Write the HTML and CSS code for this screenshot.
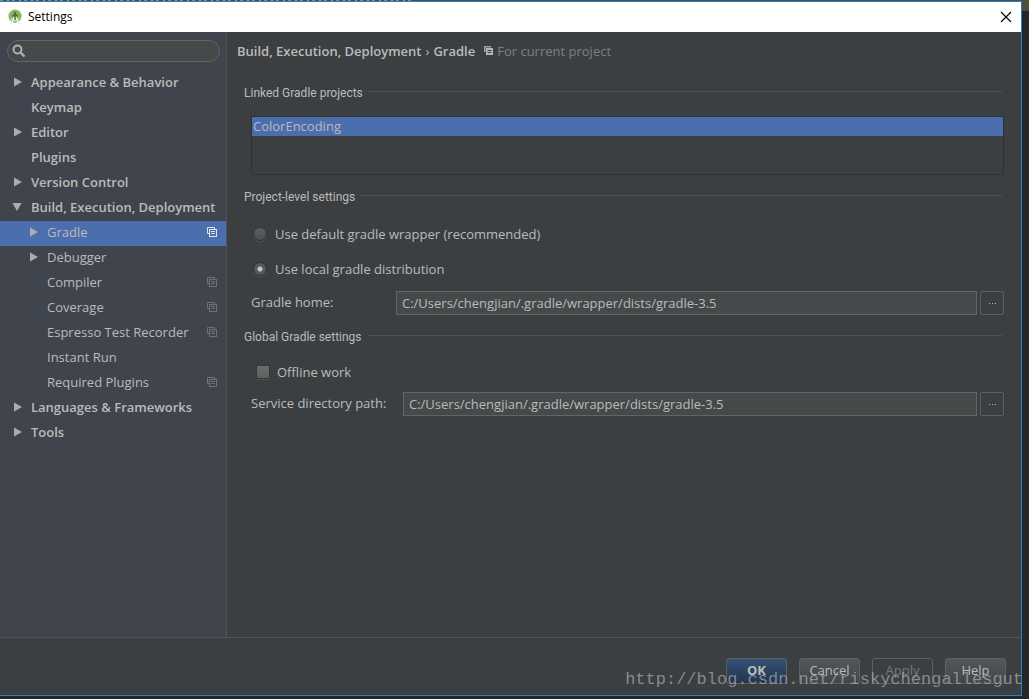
FILE: index.html
```html
<!DOCTYPE html>
<html lang="en">
<head>
<meta charset="utf-8">
<title>Settings</title>
<link rel="stylesheet" href="styles.css">
</head>
<body>
<svg class="defs" aria-hidden="true">
  <symbol id="copy" viewBox="0 0 10 10">
    <path d="M2.500 6.500H.5V.5H7.500V2" fill="none" stroke="currentColor"/>
    <rect x="2.500" y="2.500" width="7" height="7" fill="none" stroke="currentColor"/>
    <path d="M4 4.500H8M4 6.500H8" stroke="currentColor"/>
  </symbol>
  <symbol id="right" viewBox="0 0 8 10"><path d="M0 .5L8 5L0 9.500Z" fill="currentColor"/></symbol>
  <symbol id="down" viewBox="0 0 10 8"><path d="M.5 0H9.500L5 8Z" fill="currentColor"/></symbol>
</svg>
<div class="desktop">
  <div class="editor-strip"></div>
  <div class="dialog">
    <header class="titlebar">
      <svg class="app-icon" viewBox="0 0 16 16" aria-hidden="true">
        <circle cx="7.500" cy="7" r="7" fill="#86b95a"/>
        <path d="M4.500 7.500A3 3 0 0 1 10.500 7.500Z" fill="#59635a"/>
        <path d="M7.500 2.500V6" stroke="#59635a" stroke-width="2"/>
        <path d="M7 8L3 15.500M8 8L12 15.500" stroke="#eef3ee" stroke-width="1.800" fill="none"/>
        <path d="M3 9.500Q7.500 14 12 9.500" stroke="#dfe8dc" stroke-width="1.200" fill="none"/>
        <path d="M7.500 6V11" stroke="#59635a" stroke-width="1.500"/>
      </svg>
      <h1 class="title">Settings</h1>
      <button class="close" aria-label="Close"><svg viewBox="0 0 12 12" width="12" height="12"><path d="M1 1L11 11M11 1L1 11" stroke="#000" stroke-width="1.100"/></svg></button>
    </header>
    <div class="content">
      <aside class="sidebar">
        <label class="search">
          <svg viewBox="0 0 14 14" width="14" height="14" aria-hidden="true"><circle cx="5.500" cy="5.500" r="4" fill="none" stroke="#afb1b3" stroke-width="2"/><path d="M8.500 8.500L12.500 12.500" stroke="#afb1b3" stroke-width="2.400"/></svg>
          <input type="text" aria-label="Search settings">
        </label>
        <nav class="tree">
          <a class="row" href="#"><span class="arrow"><svg class="right"><use href="#right"/></svg></span>Appearance &amp; Behavior</a>
          <a class="row" href="#"><span class="arrow"></span>Keymap</a>
          <a class="row" href="#"><span class="arrow"><svg class="right"><use href="#right"/></svg></span>Editor</a>
          <a class="row" href="#"><span class="arrow"></span>Plugins</a>
          <a class="row" href="#"><span class="arrow"><svg class="right"><use href="#right"/></svg></span>Version Control</a>
          <a class="row" href="#"><span class="arrow"><svg class="down"><use href="#down"/></svg></span>Build, Execution, Deployment</a>
          <a class="row child selected" href="#"><span class="arrow"><svg class="right"><use href="#right"/></svg></span>Gradle<svg class="copy"><use href="#copy"/></svg></a>
          <a class="row child" href="#"><span class="arrow"><svg class="right"><use href="#right"/></svg></span>Debugger</a>
          <a class="row child" href="#"><span class="arrow"></span>Compiler<svg class="copy"><use href="#copy"/></svg></a>
          <a class="row child" href="#"><span class="arrow"></span>Coverage<svg class="copy"><use href="#copy"/></svg></a>
          <a class="row child" href="#"><span class="arrow"></span>Espresso Test Recorder<svg class="copy"><use href="#copy"/></svg></a>
          <a class="row child" href="#"><span class="arrow"></span>Instant Run</a>
          <a class="row child" href="#"><span class="arrow"></span>Required Plugins<svg class="copy"><use href="#copy"/></svg></a>
          <a class="row" href="#"><span class="arrow"><svg class="right"><use href="#right"/></svg></span>Languages &amp; Frameworks</a>
          <a class="row" href="#"><span class="arrow"><svg class="right"><use href="#right"/></svg></span>Tools</a>
        </nav>
      </aside>
      <main class="page">
        <div class="crumbs">
          <span>Build, Execution, Deployment</span><span class="sep">›</span><span>Gradle</span>
          <svg class="scope-icon" viewBox="0 0 10 10" aria-hidden="true"><path d="M.75 6V.75H7" fill="none" stroke="#8fa3b0" stroke-width="1.500"/><rect x="2" y="2" width="7" height="7" fill="#b4b6b7"/><path d="M3.500 4.500H7.500M3.500 6.500H7.500" stroke="#3c3f41"/></svg>
          <span class="scope">For current project</span>
        </div>
        <section class="group">
          <h2>Linked Gradle projects</h2>
          <ul class="projects"><li>ColorEncoding</li></ul>
        </section>
        <section class="group">
          <h2>Project-level settings</h2>
          <div class="radios">
            <label class="choice"><input type="radio" name="dist">Use default gradle wrapper (recommended)</label>
            <label class="choice"><input type="radio" name="dist" checked>Use local gradle distribution</label>
          </div>
          <div class="field">
            <label class="home-label" for="home">Gradle home:</label>
            <input id="home" type="text" value="C:/Users/chengjian/.gradle/wrapper/dists/gradle-3.5">
            <button class="browse" aria-label="Browse Gradle home"><i></i><i></i><i></i></button>
          </div>
        </section>
        <section class="group">
          <h2>Global Gradle settings</h2>
          <label class="choice offline"><input type="checkbox">Offline work</label>
          <div class="field">
            <label class="service-label" for="service">Service directory path:</label>
            <input id="service" type="text" value="C:/Users/chengjian/.gradle/wrapper/dists/gradle-3.5">
            <button class="browse" aria-label="Browse service directory"><i></i><i></i><i></i></button>
          </div>
        </section>
      </main>
    </div>
    <footer class="actions">
      <button class="btn primary">OK</button>
      <button class="btn">Cancel</button>
      <button class="btn disabled" disabled>Apply</button>
      <button class="btn">Help</button>
    </footer>
  </div>
  <div class="watermark">http://blog.csdn.net/riskychengallesgut</div>
</div>
</body>
</html>
```
FILE: styles.css
```css
* { box-sizing: border-box; }
body {
  margin: 0;
  background: #242627;
  color: #bbbbbb;
  font: 13px/20px "Open Sans", "Noto Sans", sans-serif;
}
h1, h2, ul { margin: 0; padding: 0; font-weight: 400; }
button, input { font: inherit; color: inherit; }
svg { display: block; flex: none; }
.defs { position: absolute; width: 0; height: 0; }

.desktop {
  position: relative;
  display: flex;
  flex-direction: column;
  min-height: 100vh;
  padding: 0 7px 3px 0;
  background: linear-gradient(#4f4d3c, #4f4d3c) right top / 7px 11px no-repeat, #242627;
}
.editor-strip {
  height: 1px;
  background: repeating-linear-gradient(90deg, #8f8b78 0 3px, #4f4d3c 3px 7px, #a39b83 7px 9px, #4f4d3c 9px 12px) left top / 411px 1px no-repeat, #4f4d3c;
}
.dialog {
  flex: 1;
  display: flex;
  flex-direction: column;
  border: 1px solid #2482cd;
  border-left: 0;
  background: #3c3f41;
}
.titlebar {
  display: flex;
  align-items: center;
  height: 30px;
  padding: 0 9px 0 8px;
  background: #fff;
  color: #000;
}
.app-icon { width: 15px; height: 16px; }
.title { flex: 1; margin-left: 5px; font-size: 12px; }
.close { padding: 0; border: 0; background: none; }

.content { flex: 1; display: flex; border-bottom: 1px solid #515354; }
.sidebar {
  width: 227px;
  flex: none;
  padding-top: 8px;
  background: #40444d;
  border-right: 1px solid #515354;
}
.search {
  display: flex;
  align-items: center;
  height: 22px;
  margin: 0 6px 9px 7px;
  padding: 0 10px 0 4px;
  border: 1px solid #646464;
  border-radius: 11px;
  background: #45494a;
}
.search input { flex: 1; min-width: 0; border: 0; background: none; outline: 0; }
.row {
  display: flex;
  align-items: center;
  height: 25px;
  padding: 0 9px 3px 12px;
  color: #bbbbbb;
  font-weight: 600;
  text-decoration: none;
  white-space: nowrap;
}
.child { padding-left: 28px; font-weight: 400; }
.selected { background: #4b6eaf; }
.arrow { width: 19px; flex: none; color: #adadad; }
.right { width: 8px; height: 10px; margin-left: 2px; }
.down { width: 10px; height: 8px; }
.copy { width: 10px; height: 10px; margin-left: auto; color: #6e7275; }
.selected .copy { color: #dfe3ea; }

.page { flex: 1; min-width: 0; padding: 9px 17px 16px; }
.crumbs {
  display: flex;
  align-items: center;
  margin: 0 0 23px -7px;
  font-weight: 600;
}
.sep { margin: 0 4px; font-weight: 400; }
.scope-icon { width: 10px; height: 10px; margin: 0 3px 0 9px; }
.scope { color: #7d7f80; font-weight: 400; }
.group { margin-bottom: 13px; }
.group h2 {
  display: flex;
  align-items: center;
  gap: 6px;
  font: 12px/18px Roboto, "Open Sans", sans-serif;
}
.group h2::after { content: ""; flex: 1; height: 1px; margin: 0 2px 4px 0; background: #515354; }
.projects {
  height: 59px;
  margin: 14px 0 0 7px;
  border: 1px solid #2f3132;
  list-style: none;
}
.projects li { padding-left: 1px; line-height: 19px; background: #4b6eaf; }
.radios { display: grid; gap: 15px; margin: 18px 0 12px; }
.choice { display: flex; align-items: center; gap: 8px; margin-left: 9px; }
.choice input { appearance: none; width: 14px; height: 14px; margin: 0; }
.choice input[type="radio"] {
  border: 1px solid #2f3132;
  border-radius: 7px;
  background: linear-gradient(#5c6062, #4c5052);
  box-shadow: 0 1px #535657;
}
.choice input[type="radio"]:checked { background: radial-gradient(circle, #c4c4c4 0 2px, #55595b 3px); }
.offline { gap: 7px; margin: 16px 0 10px 12px; }
.choice input[type="checkbox"] {
  border: 1px solid #35383a;
  border-radius: 2px;
  background: linear-gradient(#6c6c6c, #606060);
  box-shadow: 0 1px #505354;
}
.field { display: flex; margin-left: 7px; }
.field label { flex: none; line-height: 23px; }
.home-label { width: 145px; }
.service-label { width: 152px; }
.field input {
  flex: 1;
  min-width: 0;
  height: 24px;
  padding: 0 5px 1px;
  border: 1px solid #646464;
  background: #45494a;
  outline: 0;
}
.browse {
  display: flex;
  align-items: center;
  justify-content: center;
  gap: 2px;
  width: 24px;
  height: 24px;
  margin-left: 3px;
  padding: 0;
  border: 1px solid #5c5f60;
  border-radius: 2px;
  background: #3c3f41;
}
.browse i { width: 1px; height: 1px; background: #bbbbbb; }

.actions {
  display: flex;
  justify-content: flex-end;
  gap: 12px;
  padding: 20px 15px 11px;
}
.btn {
  width: 61px;
  height: 26px;
  padding: 0 0 2px;
  border: 1px solid #5e6162;
  border-radius: 3px;
  background: linear-gradient(#525759, #414648);
}
.primary { background: linear-gradient(#365073, #233550); font-weight: 700; }
.disabled { background: none; color: #777777; }
.watermark {
  position: absolute;
  right: 6px;
  bottom: 9px;
  color: rgba(190, 190, 190, 0.6);
  font: 17px/20px "Liberation Mono", monospace;
  pointer-events: none;
}
```
